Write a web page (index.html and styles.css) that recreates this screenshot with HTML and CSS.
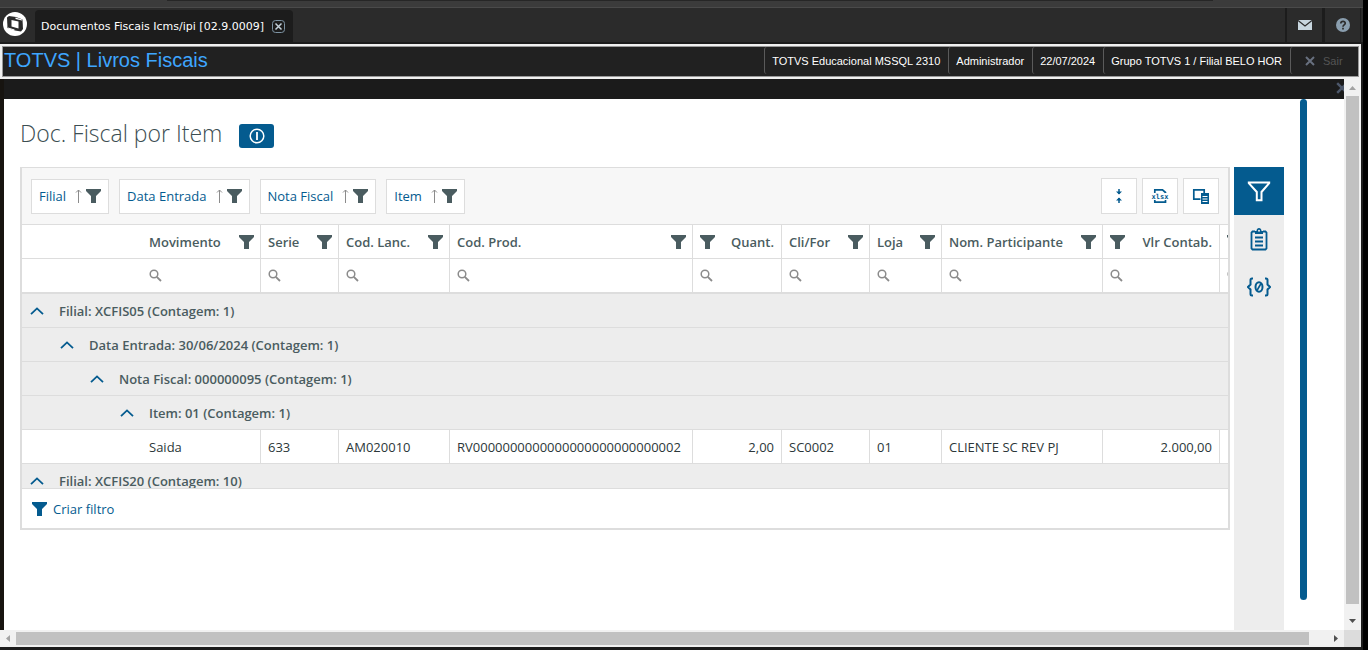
FILE: index.html
```html
<!DOCTYPE html>
<html lang="pt-BR">

<head>
  <title>Livros Fiscais</title>
  <meta charset="UTF-8">
  <link rel="stylesheet" href="styles.css">
</head>

<body>
  <svg class="simbolos" aria-hidden="true">
    <symbol id="funil" viewBox="0 0 15 14">
      <path d="M0 0h15v2l-5 5v7H5V7L0 2z" fill="currentColor" />
    </symbol>
    <symbol id="lupa" viewBox="0 0 13 13">
      <circle cx="5" cy="5" r="3.8" fill="none" stroke="currentColor" stroke-width="1.5" />
      <path d="M7.8 7.8L12 12" stroke="currentColor" stroke-width="1.8" />
    </symbol>
    <symbol id="seta" viewBox="0 0 7 14">
      <path d="M3.5 14V1M1 3.5L3.5 1L6 3.5" fill="none" stroke="currentColor" />
    </symbol>
    <symbol id="acima" viewBox="0 0 14 8">
      <path d="M1 7.2L7 1.4L13 7.2" fill="none" stroke="currentColor" stroke-width="1.8" />
    </symbol>
    <symbol id="fechar" viewBox="0 0 10 10">
      <path d="M1 1L9 9M9 1L1 9" stroke="currentColor" stroke-width="2" />
    </symbol>
  </svg>

  <div class="janela">
    <div class="faixa-topo"></div>
    <header class="abas">
      <svg class="logo" viewBox="0 0 24 24">
        <circle cx="12" cy="12" r="12" fill="#fff" />
        <path d="M4 5.500L6 4L13 5L19.500 7.500L20 17L18 19.500L12 18.500L4.500 16z" fill="#2b2b2b" />
        <path d="M8.500 8L15.500 9.500V16.500L8.500 14.500z" fill="#fff" />
        <path d="M12.500 5.500L19 7.500V8.500L12.500 7zM5 15.500L11.500 17.500V18.500L5 16.500z" fill="#fff" />
      </svg>
      <div class="aba">
        <span>Documentos Fiscais Icms/ipi [02.9.0009]</span>
        <button class="fechar-aba" aria-label="Fechar aba">
          <svg viewBox="0 0 13 13"><rect x=".5" y=".5" width="12" height="12" rx="3" fill="none" stroke="#7d93a3" /><path d="M3.500 3.500l6 6M9.500 3.500l-6 6" stroke="#c3d0d9" stroke-width="1.500" /></svg>
        </button>
      </div>
      <div class="acoes">
        <button aria-label="Mensagens">
          <svg width="14" height="10" viewBox="0 0 14 10"><rect width="14" height="10" fill="#c8d6df" /><path d="M0 .5L7 6L14 .5" fill="none" stroke="#2b2b2b" stroke-width="1.300" /></svg>
        </button>
        <button aria-label="Ajuda">
          <svg width="14" height="14" viewBox="0 0 14 14"><circle cx="7" cy="7" r="7" fill="#8a9eae" /><path d="M4.800 5.600C4.800 2.500 9.400 2.700 9.200 5.400C9.100 6.900 7 6.900 7 8.700M7 9.800v1.700" fill="none" stroke="#2b2b2b" stroke-width="1.700" /></svg>
        </button>
      </div>
    </header>

    <div class="moldura">
      <div class="info">
        <h1>TOTVS | Livros Fiscais</h1>
        <span class="dado">TOTVS Educacional MSSQL 2310</span>
        <span class="dado">Administrador</span>
        <span class="dado">22/07/2024</span>
        <span class="dado">Grupo TOTVS 1 / Filial BELO HOR</span>
        <button class="dado sair"><svg width="10" height="10"><use href="#fechar" /></svg>Sair</button>
      </div>
    </div>

    <div class="area">
      <div class="pagina">
        <div class="barra-fechar">
          <button aria-label="Fechar"><svg width="12" height="12"><use href="#fechar" /></svg></button>
        </div>
        <main class="miolo">
          <section class="conteudo">
            <div class="titulo">
              <h2>Doc. Fiscal por Item</h2>
              <button class="ajuda" aria-label="Informações">
                <svg width="16" height="16" viewBox="0 0 16 16" fill="none" stroke="#fff"><circle cx="8" cy="8" r="6.800" stroke-width="1.500" /><path d="M8 4v8" stroke-width="1.800" /></svg>
              </button>
            </div>
            <div class="paineis">
              <div class="grade">
                <div class="ferramentas">
                  <button class="grupo"><span>Filial</span><svg class="seta"><use href="#seta" /></svg><svg class="funil"><use href="#funil" /></svg></button>
                  <button class="grupo"><span>Data Entrada</span><svg class="seta"><use href="#seta" /></svg><svg class="funil"><use href="#funil" /></svg></button>
                  <button class="grupo"><span>Nota Fiscal</span><svg class="seta"><use href="#seta" /></svg><svg class="funil"><use href="#funil" /></svg></button>
                  <button class="grupo"><span>Item</span><svg class="seta"><use href="#seta" /></svg><svg class="funil"><use href="#funil" /></svg></button>
                  <div class="botoes">
                    <button aria-label="Recolher tudo">
                      <svg width="18" height="18" viewBox="0 0 18 18"><path d="M9 2v5M9 16v-5" stroke="currentColor" stroke-width="1.500" /><path d="M6 4.500h6L9 7.500zM6 13.500h6L9 10.500z" fill="currentColor" /></svg>
                    </button>
                    <button aria-label="Exportar para Excel">
                      <svg width="18" height="18" viewBox="0 0 18 18"><path d="M3.800 6V2.800H11.500L14.500 5.500V6M3.800 13V15.200H14.500V13" fill="none" stroke="currentColor" stroke-width="1.700" /><text x="9" y="11.500" class="xlsx">xlsx</text></svg>
                    </button>
                    <button aria-label="Seletor de colunas">
                      <svg width="18" height="18" viewBox="0 0 18 18"><path d="M8.500 12.200H1.800V2.800H12.200V6" fill="none" stroke="currentColor" stroke-width="1.700" /><path d="M9 6h8v11H9z" fill="currentColor" /><path d="M10.500 9.500h5M10.500 12h5M10.500 14.500h5" stroke="#fff" /></svg>
                    </button>
                  </div>
                </div>

                <div class="rolagem">
                  <table class="tabela">
                    <colgroup>
                      <col class="c-movimento">
                      <col class="c-serie">
                      <col class="c-lanc">
                      <col class="c-prod">
                      <col class="c-quant">
                      <col class="c-cli">
                      <col class="c-loja">
                      <col class="c-nome">
                      <col class="c-valor">
                      <col class="c-extra">
                    </colgroup>
                    <thead>
                      <tr class="cabecalho">
                        <th class="recuo"><div>Movimento<button aria-label="Filtrar Movimento"><svg class="funil"><use href="#funil" /></svg></button></div></th>
                        <th><div>Serie<button aria-label="Filtrar Serie"><svg class="funil"><use href="#funil" /></svg></button></div></th>
                        <th><div>Cod. Lanc.<button aria-label="Filtrar Cod. Lanc."><svg class="funil"><use href="#funil" /></svg></button></div></th>
                        <th><div>Cod. Prod.<button aria-label="Filtrar Cod. Prod."><svg class="funil"><use href="#funil" /></svg></button></div></th>
                        <th class="numero"><div>Quant.<button aria-label="Filtrar Quant."><svg class="funil"><use href="#funil" /></svg></button></div></th>
                        <th><div>Cli/For<button aria-label="Filtrar Cli/For"><svg class="funil"><use href="#funil" /></svg></button></div></th>
                        <th><div>Loja<button aria-label="Filtrar Loja"><svg class="funil"><use href="#funil" /></svg></button></div></th>
                        <th><div>Nom. Participante<button aria-label="Filtrar Nom. Participante"><svg class="funil"><use href="#funil" /></svg></button></div></th>
                        <th class="numero"><div>Vlr Contab.<button aria-label="Filtrar Vlr Contab."><svg class="funil"><use href="#funil" /></svg></button></div></th>
                        <th class="numero"><div><button aria-label="Filtrar"><svg class="funil"><use href="#funil" /></svg></button></div></th>
                      </tr>
                      <tr class="busca">
                        <td class="recuo"><label><svg><use href="#lupa" /></svg><input type="text" aria-label="Buscar Movimento"></label></td>
                        <td><label><svg><use href="#lupa" /></svg><input type="text" aria-label="Buscar Serie"></label></td>
                        <td><label><svg><use href="#lupa" /></svg><input type="text" aria-label="Buscar Cod. Lanc."></label></td>
                        <td><label><svg><use href="#lupa" /></svg><input type="text" aria-label="Buscar Cod. Prod."></label></td>
                        <td><label><svg><use href="#lupa" /></svg><input type="text" aria-label="Buscar Quant."></label></td>
                        <td><label><svg><use href="#lupa" /></svg><input type="text" aria-label="Buscar Cli/For"></label></td>
                        <td><label><svg><use href="#lupa" /></svg><input type="text" aria-label="Buscar Loja"></label></td>
                        <td><label><svg><use href="#lupa" /></svg><input type="text" aria-label="Buscar Nom. Participante"></label></td>
                        <td><label><svg><use href="#lupa" /></svg><input type="text" aria-label="Buscar Vlr Contab."></label></td>
                        <td><label><svg><use href="#lupa" /></svg><input type="text" aria-label="Buscar"></label></td>
                      </tr>
                    </thead>
                    <tbody>
                      <tr class="agrupador nivel-1">
                        <td colspan="10"><button><svg><use href="#acima" /></svg>Filial: XCFIS05 (Contagem: 1)</button></td>
                      </tr>
                      <tr class="agrupador nivel-2">
                        <td colspan="10"><button><svg><use href="#acima" /></svg>Data Entrada: 30/06/2024 (Contagem: 1)</button></td>
                      </tr>
                      <tr class="agrupador nivel-3">
                        <td colspan="10"><button><svg><use href="#acima" /></svg>Nota Fiscal: 000000095 (Contagem: 1)</button></td>
                      </tr>
                      <tr class="agrupador nivel-4">
                        <td colspan="10"><button><svg><use href="#acima" /></svg>Item: 01 (Contagem: 1)</button></td>
                      </tr>
                      <tr>
                        <td class="recuo">Saida</td>
                        <td>633</td>
                        <td>AM020010</td>
                        <td>RV0000000000000000000000000002</td>
                        <td class="numero">2,00</td>
                        <td>SC0002</td>
                        <td>01</td>
                        <td>CLIENTE SC REV PJ</td>
                        <td class="numero">2.000,00</td>
                        <td></td>
                      </tr>
                      <tr class="agrupador nivel-1">
                        <td colspan="10"><button><svg><use href="#acima" /></svg>Filial: XCFIS20 (Contagem: 10)</button></td>
                      </tr>
                    </tbody>
                  </table>
                </div>

                <div class="rodape">
                  <button><svg class="funil"><use href="#funil" /></svg>Criar filtro</button>
                </div>
              </div>

              <nav class="lateral">
                <button class="ativo" aria-label="Filtros">
                  <svg width="24" height="24" viewBox="0 0 24 24"><path d="M1.800 3.500H22.200V4.200L14.500 13V21.200H9.800V13L1.800 4.200z" fill="none" stroke="currentColor" stroke-width="2" /></svg>
                </button>
                <button aria-label="Relatórios">
                  <svg width="24" height="24" viewBox="0 0 24 24"><path d="M8 4.500H5.500L4.500 5.500V21.500L5.500 22.500H18.500L19.500 21.500V5.500L18.500 4.500H16" fill="none" stroke="currentColor" stroke-width="1.800" /><path d="M8 7V4h1.500C9.500 0 14.500 0 14.500 4H16v3z" fill="currentColor" /><circle cx="12" cy="3.800" r="1" fill="#ededed" /><path d="M8 10.500h8M8 14.500h8M8 18.500h8" stroke="currentColor" stroke-width="1.800" /></svg>
                </button>
                <button aria-label="Parâmetros">
                  <svg width="24" height="24" viewBox="0 0 24 24" fill="none" stroke="currentColor" stroke-width="2"><path d="M6 3.500H5Q3.500 3.500 3.500 5V9.500L1 12L3.500 14.500V19Q3.500 20.500 5 20.500H6M18 3.500H19Q20.500 3.500 20.500 5V9.500L23 12L20.500 14.500V19Q20.500 20.500 19 20.500H18" /><ellipse cx="12" cy="12" rx="3.500" ry="4.800" /><path d="M10 15.500L14 8.500" stroke-width="1.600" /></svg>
                </button>
              </nav>
            </div>
          </section>
          <div class="indicador"></div>
        </main>
      </div>

      <div class="rolagem-v">
        <svg width="7" height="4"><path d="M0 4L3.500 0L7 4z" fill="#a3a3a3" /></svg>
        <div class="cursor"></div>
        <svg width="7" height="4"><path d="M0 0L3.500 4L7 0z" fill="#505050" /></svg>
      </div>
      <div class="rolagem-h">
        <svg width="4" height="7"><path d="M4 0L0 3.500L4 7z" fill="#a3a3a3" /></svg>
        <div class="cursor"></div>
        <svg width="4" height="7"><path d="M0 0L4 3.500L0 7z" fill="#505050" /></svg>
      </div>
      <div class="canto"></div>
    </div>
  </div>
</body>

</html>
```
FILE: styles.css
```css
* {
  margin: 0;
  padding: 0;
  box-sizing: border-box;
}

body {
  font-family: 'Open Sans', 'Noto Sans', sans-serif;
  font-size: 13px;
  color: #2c3739;
  background-color: #000;
}

button {
  font: inherit;
  color: inherit;
  background: none;
  border: none;
  cursor: pointer;
}

svg {
  display: block;
  flex: none;
}

.simbolos {
  display: none;
}

.janela {
  height: 100vh;
  margin-right: 5px;
  padding-bottom: 3px;
  background-color: #1c1c1c;
  display: flex;
  flex-direction: column;
}

.faixa-topo {
  height: 8px;
  padding: 0 150px 0 167px;
  background-color: #3b3b3b;
  border-bottom: 1px solid #4a4a4a;
}

.faixa-topo::before {
  content: '';
  display: block;
  height: 1px;
  background-color: #262626;
}

/* abas do sistema */
.abas {
  height: 36px;
  padding-right: 2px;
  background-color: #2b2b2b;
  border-bottom: 2px solid #1c1c1c;
  display: flex;
  align-items: flex-start;
}

.logo {
  width: 24px;
  height: 24px;
  margin: 4px 8px 0 3px;
}

.aba {
  height: 32px;
  margin-top: 2px;
  padding: 0 8px 0 6px;
  background-color: #1c1c1c;
  border-radius: 4px 4px 0 0;
  display: flex;
  align-items: center;
  gap: 8px;
  font-family: 'DejaVu Sans', sans-serif;
  font-size: 11px;
  color: #fff;
}

.fechar-aba svg {
  width: 13px;
  height: 13px;
}

.acoes {
  margin-left: auto;
  display: flex;
}

.acoes button {
  width: 38px;
  height: 34px;
  border-left: 2px solid #1c1c1c;
  border-right: 1px solid #1c1c1c;
  display: flex;
  align-items: center;
  justify-content: center;
}

/* dados do ambiente */
.moldura {
  padding: 2px;
  margin-right: 2px;
  background-color: #f0f0f0;
}

.info {
  height: 31px;
  border: 1px solid #999;
  background-color: #212121;
  display: flex;
  font-family: 'Liberation Sans', Arial, sans-serif;
}

.info h1 {
  flex: 1;
  padding-left: 1px;
  font-size: 20px;
  line-height: 27px;
  font-weight: normal;
  color: #3ea6ff;
}

.dado {
  height: 27px;
  padding: 0 8px 0 7px;
  border-left: 1px solid #5a5a5a;
  border-radius: 3px;
  font-size: 11px;
  line-height: 28px;
  color: #fff;
}

.sair {
  width: 68px;
  padding: 0 14px;
  display: flex;
  align-items: center;
  gap: 8px;
  color: #555;
}

.sair svg {
  color: #68707f;
}

/* pagina com barras de rolagem */
.area {
  flex: 1;
  min-height: 0;
  margin-right: 2px;
  display: grid;
  grid-template-columns: 1fr 17px;
  grid-template-rows: 1fr 17px;
}

.pagina {
  min-width: 0;
  min-height: 0;
  border-left: 4px solid #171410;
  background-color: #fff;
  display: flex;
  flex-direction: column;
  overflow: hidden;
}

.barra-fechar {
  height: 20px;
  background-color: #1b1b1b;
  display: flex;
  justify-content: flex-end;
  color: #4d586b;
  overflow: hidden;
}

.barra-fechar button {
  height: 18px;
  margin-right: -4px;
}

.rolagem-v,
.rolagem-h {
  background-color: #f1f1f1;
  display: flex;
  align-items: center;
}

.rolagem-v {
  flex-direction: column;
  padding: 7px 0;
  gap: 6px;
}

.rolagem-h {
  padding: 0 6px;
  gap: 6px;
}

.cursor {
  flex: 1;
  background-color: #c1c1c1;
}

.rolagem-v .cursor {
  width: 13px;
  margin-bottom: 9px;
}

.rolagem-h .cursor {
  height: 13px;
  margin-right: 19px;
}

.canto {
  background-color: #dcdcdc;
}

.miolo {
  flex: 1;
  display: flex;
  padding: 0 37px 0 16px;
  gap: 16px;
}

.indicador {
  width: 7px;
  margin-bottom: 30px;
  border-radius: 4px;
  background-color: #045b8f;
}

.conteudo {
  flex: 1;
  min-width: 0;
  display: flex;
  flex-direction: column;
}

.titulo {
  height: 68px;
  display: flex;
  align-items: center;
  gap: 17px;
}

.titulo h2 {
  font-family: 'Open Sans', sans-serif;
  font-weight: 300;
  font-size: 23px;
  color: #3c4e52;
}

.ajuda {
  width: 35px;
  height: 24px;
  margin-top: 6px;
  border-radius: 3px;
  background-color: #045b8f;
  display: flex;
  align-items: center;
  justify-content: center;
}

.paineis {
  flex: 1;
  display: flex;
  align-items: stretch;
  gap: 4px;
}

.lateral {
  width: 50px;
  background-color: #ededed;
  color: #045b8f;
}

.lateral button {
  width: 100%;
  height: 48px;
  display: flex;
  align-items: center;
  justify-content: center;
}

.lateral .ativo {
  background-color: #045b8f;
  color: #fff;
}

.grade {
  flex: 1;
  min-width: 0;
  align-self: flex-start;
  border: 2px solid #ddd;
  border-top-width: 1px;
}

.ferramentas {
  height: 57px;
  padding: 0 9px;
  background-color: #f7f7f7;
  border-bottom: 1px solid #ddd;
  display: flex;
  align-items: center;
  gap: 10px;
}

.grupo {
  height: 35px;
  padding: 0 7px;
  border: 1px solid #ddd;
  background-color: #fff;
  color: #045b8f;
  display: flex;
  align-items: center;
}

.seta {
  width: 7px;
  height: 14px;
  margin: 0 4px 0 9px;
  color: #8b8b8b;
}

.funil {
  width: 15px;
  height: 14px;
  color: #4a5c60;
}

.botoes {
  margin-left: auto;
  display: flex;
  gap: 5px;
}

.botoes button {
  width: 36px;
  height: 36px;
  border: 1px solid #ddd;
  background-color: #fff;
  color: #045b8f;
  display: flex;
  align-items: center;
  justify-content: center;
}

.xlsx {
  font-family: 'DejaVu Sans Mono', monospace;
  font-size: 7px;
  font-weight: bold;
  text-anchor: middle;
  fill: currentColor;
}

/* tabela */
.rolagem {
  height: 263px;
  overflow: hidden;
}

.tabela {
  width: 1298px;
  table-layout: fixed;
  border-spacing: 0;
}

.c-movimento { width: 239px; }
.c-serie { width: 78px; }
.c-lanc { width: 111px; }
.c-prod { width: 243px; }
.c-quant { width: 89px; }
.c-cli { width: 88px; }
.c-loja { width: 72px; }
.c-nome { width: 161px; }
.c-valor { width: 117px; }
.c-extra { width: 100px; }

.tabela th,
.tabela td {
  height: 34px;
  padding: 0 7px;
  border-right: 1px solid #ddd;
  border-bottom: 1px solid #ddd;
  white-space: nowrap;
  text-align: left;
}

.tabela .recuo {
  padding-left: 127px;
}

.tabela .numero {
  text-align: right;
}

.tabela .cabecalho th {
  padding-right: 6px;
  font-weight: 600;
  color: #4a5c60;
}

.cabecalho div {
  display: flex;
  align-items: center;
  justify-content: space-between;
}

.tabela .cabecalho .numero {
  padding-right: 7px;
}

.cabecalho .numero div {
  flex-direction: row-reverse;
}

.cabecalho .numero:last-child div {
  justify-content: flex-end;
}

.tabela .busca td {
  height: 35px;
  border-bottom-width: 2px;
}

.busca label {
  display: flex;
  align-items: center;
  color: #8b8b8b;
}

.busca svg {
  width: 13px;
  height: 13px;
}

.busca input {
  flex: 1;
  min-width: 0;
  height: 24px;
  padding-left: 6px;
  border: none;
  outline: none;
  background: none;
  font: inherit;
}

.agrupador td {
  background-color: #ededed;
  font-weight: 600;
  color: #4a5c60;
}

.agrupador button {
  display: flex;
  align-items: center;
  gap: 15px;
}

.agrupador svg {
  width: 14px;
  height: 8px;
  color: #045b8f;
}

.tabela .nivel-1 td { padding-left: 8px; }
.tabela .nivel-2 td { padding-left: 38px; }
.tabela .nivel-3 td { padding-left: 68px; }
.tabela .nivel-4 td { padding-left: 98px; }

.rodape {
  height: 40px;
  padding-left: 10px;
  border-top: 1px solid #ddd;
  display: flex;
  align-items: center;
}

.rodape button {
  display: flex;
  align-items: center;
  gap: 6px;
  color: #045b8f;
}

.rodape .funil {
  color: #045b8f;
}
```
